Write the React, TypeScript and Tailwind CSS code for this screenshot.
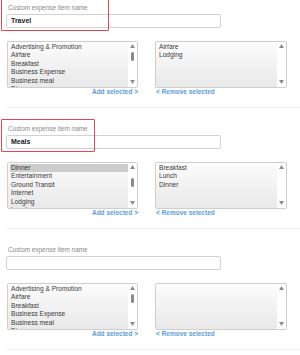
import React from 'react';

type ListProps = {
  items: string[];
  selected?: string;
  thumb?: string; // full class for the thumb offset, or none
};

const ListBox = ({ items, selected, thumb }: ListProps) => (
  <div className="flex h-[47px] overflow-hidden rounded-[2px] border border-[#cfcfcf] bg-white shadow-[0_0_1px_rgba(0,0,0,0.08)]">
    <div className="flex-1 overflow-hidden bg-gradient-to-b from-[#fcfcfc] via-[#f2f2f2] to-[#e9e9e9] pl-[2px] pt-[0.5px]">
      {items.map((item) => (
        <div
          key={item}
          className={
            item === selected
              ? 'bg-[#cdcdcd] px-[1px] text-[6.6px] leading-[8.5px] text-[#333]'
              : 'px-[1px] text-[6.6px] leading-[8.5px] text-[#3a3a3a]'
          }
        >
          {item}
        </div>
      ))}
    </div>
    <div className="flex w-[9px] flex-col items-center bg-white pt-[2px] pb-[3px]">
      <svg width="5" height="4" viewBox="0 0 5 4">
        <path d="M2.5 0 L5 4 L0 4 Z" fill="#8d8d8d" />
      </svg>
      {thumb && <div className={`w-[3.5px] h-[8.5px] rounded-full bg-[#8a8a8a] ${thumb}`} />}
      <div className="flex-1" />
      <svg width="5" height="4" viewBox="0 0 5 4">
        <path d="M0 0 L5 0 L2.5 4 Z" fill="#8d8d8d" />
      </svg>
    </div>
  </div>
);

type SectionProps = {
  value: string;
  highlight?: string; // width class for the red annotation box
  left: string[];
  leftSelected?: string;
  leftThumb: string;
  right: string[];
};

const Section = ({ value, highlight, left, leftSelected, leftThumb, right }: SectionProps) => (
  <div className="relative h-[121px]">
    {highlight && (
      <div className={`pointer-events-none absolute left-[0.5px] top-0 h-[33px] rounded-[1px] border-[1.5px] border-[#e2474f] ${highlight}`} />
    )}
    <div className="pl-[8px] pt-[6px] text-[6.4px] leading-[8px] text-[#8a8a8a]">Custom expense item name</div>
    <div className="ml-[6px] mt-[2px] flex h-[14px] w-[215px] items-center rounded-[2px] border border-[#d2d2d2] bg-white pl-[4px] text-[7px] font-bold text-[#222]">
      {value}
    </div>
    <div className="mt-[13px] flex pl-[7px]">
      <div className="w-[131px]">
        <ListBox items={left} selected={leftSelected} thumb={leftThumb} />
        <div className="text-right text-[6.5px] font-bold leading-[8px] text-[#5d9cd8]">Add selected &gt;</div>
      </div>
      <div className="ml-[17px] w-[132px]">
        <ListBox items={right} />
        <div className="pl-[1px] text-[6.5px] font-bold leading-[8px] text-[#5d9cd8]">&lt; Remove selected</div>
      </div>
    </div>
    <div className="ml-[7px] mt-[11px] h-px bg-[#ececec]" />
  </div>
);

const allItems = ['Advertising & Promotion', 'Airfare', 'Breakfast', 'Business Expense', 'Business meal', 'Dinner'];

export default function App() {
  return (
    <div className="h-[355px] w-[300px] overflow-hidden bg-white font-['Liberation_Sans',Arial,sans-serif]">
      <div className="-mt-[2px]">
        <Section
          value="Travel"
          highlight="w-[108.5px]"
          left={allItems}
          leftThumb="mt-[4px]"
          right={['Airfare', 'Lodging']}
        />
        <Section
          value="Meals"
          highlight="w-[94.5px]"
          left={['Dinner', 'Entertainment', 'Ground Transit', 'Internet', 'Lodging', 'Lunch']}
          leftSelected="Dinner"
          leftThumb="mt-[9px]"
          right={['Breakfast', 'Lunch', 'Dinner']}
        />
        <Section value="" left={allItems} leftThumb="mt-[4px]" right={[]} />
      </div>
    </div>
  );
}
